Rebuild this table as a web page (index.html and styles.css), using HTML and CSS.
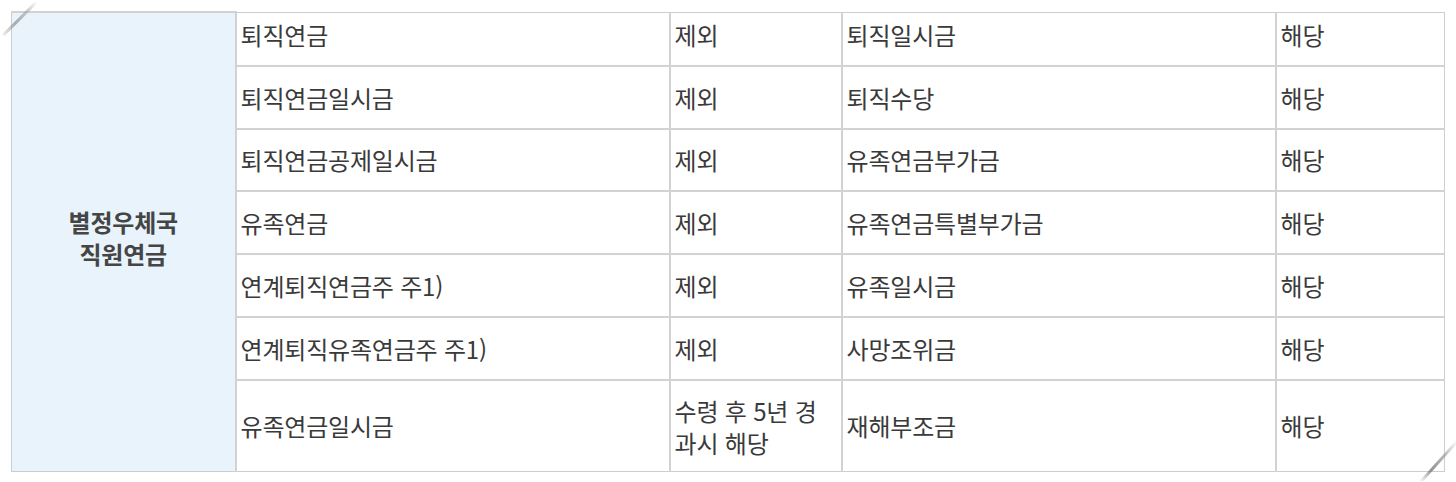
FILE: index.html
```html
<!DOCTYPE html>
<html lang="ko">
<head>
<meta charset="utf-8">
<title>별정우체국 직원연금</title>
<link rel="stylesheet" href="styles.css">
</head>
<body>
<div class="page">
  <div class="fold fold-tl"></div>
  <div class="fold fold-br"></div>
  <table class="pension">
    <colgroup>
      <col class="c1"><col class="c2"><col class="c3"><col class="c4"><col class="c5">
    </colgroup>
    <tbody>
      <tr class="r1">
        <th rowspan="7" class="head">별정우체국<br>직원연금</th>
        <td>퇴직연금</td><td>제외</td><td>퇴직일시금</td><td>해당</td>
      </tr>
      <tr class="r2"><td>퇴직연금일시금</td><td>제외</td><td>퇴직수당</td><td>해당</td></tr>
      <tr class="r3"><td>퇴직연금공제일시금</td><td>제외</td><td>유족연금부가금</td><td>해당</td></tr>
      <tr class="r4"><td>유족연금</td><td>제외</td><td>유족연금특별부가금</td><td>해당</td></tr>
      <tr class="r5"><td>연계퇴직연금주 주1)</td><td>제외</td><td>유족일시금</td><td>해당</td></tr>
      <tr class="r6"><td>연계퇴직유족연금주 주1)</td><td>제외</td><td>사망조위금</td><td>해당</td></tr>
      <tr class="r7"><td>유족연금일시금</td><td class="wrap">수령 후 5년 경<br>과시 해당</td><td>재해부조금</td><td>해당</td></tr>
    </tbody>
  </table>
</div>
</body>
</html>
```
FILE: styles.css
```css
html, body {
  margin: 0;
  padding: 0;
  background: #ffffff;
}
body {
  font-family: "Noto Sans CJK KR", "Noto Sans", sans-serif;
  color: #3a3a3a;
}
.page {
  position: relative;
  width: 1456px;
  height: 482px;
  padding: 11px 0 0 11px;
  box-sizing: border-box;
}
.pension {
  border-collapse: collapse;
  table-layout: fixed;
  width: 1433px;
  border: 1px solid #cdcdcd;
}
.c1 { width: 224px; }
.c2 { width: 434px; }
.c3 { width: 172px; }
.c4 { width: 434px; }
.c5 { width: 169px; }
.pension td, .pension th {
  border: 2px solid #d2d2d2;
  padding: 0 5px 0 4px;
  font-size: 24px;
  line-height: 32px;
  font-weight: 400;
  text-align: left;
  vertical-align: middle;
  letter-spacing: -0.2px;
  white-space: nowrap;
}
.pension th.head {
  background: #e8f3fb;
  text-align: center;
  font-weight: 700;
  color: #454545;
  line-height: 32px;
  padding: 0 0 8px 0;
  border-left: 1px solid #cdcdcd;
  border-bottom: 1px solid #cdcdcd;
}
.pension tr.r1 td { border-top: 1px solid #cdcdcd; padding-bottom: 7px; }
.pension tr.r7 td { border-bottom: 1px solid #cdcdcd; }
.pension tr td:last-child { border-right: 1px solid #cdcdcd; }
.r1 { height: 54px; }
.r2 { height: 63px; }
.r3 { height: 62px; }
.r4 { height: 63px; }
.r5 { height: 63px; }
.r6 { height: 63px; }
.r7 { height: 91px; }
.pension td.wrap { padding-top: 3px; }
.fold {
  position: absolute;
  height: 3px;
  border-radius: 2px;
}
.fold-tl {
  left: -4px;
  top: 17px;
  width: 48px;
  transform: rotate(-45deg);
  background: linear-gradient(to right, rgba(150,150,150,0.15), rgba(140,140,140,0.7) 35%, rgba(160,160,160,0.5) 75%, rgba(200,200,200,0));
}
.fold-br {
  left: 1411px;
  top: 460px;
  width: 56px;
  transform: rotate(-48deg);
  background: linear-gradient(to right, rgba(150,150,150,0), rgba(120,120,120,0.8) 30%, rgba(140,140,140,0.6) 65%, rgba(200,200,200,0));
}
```
